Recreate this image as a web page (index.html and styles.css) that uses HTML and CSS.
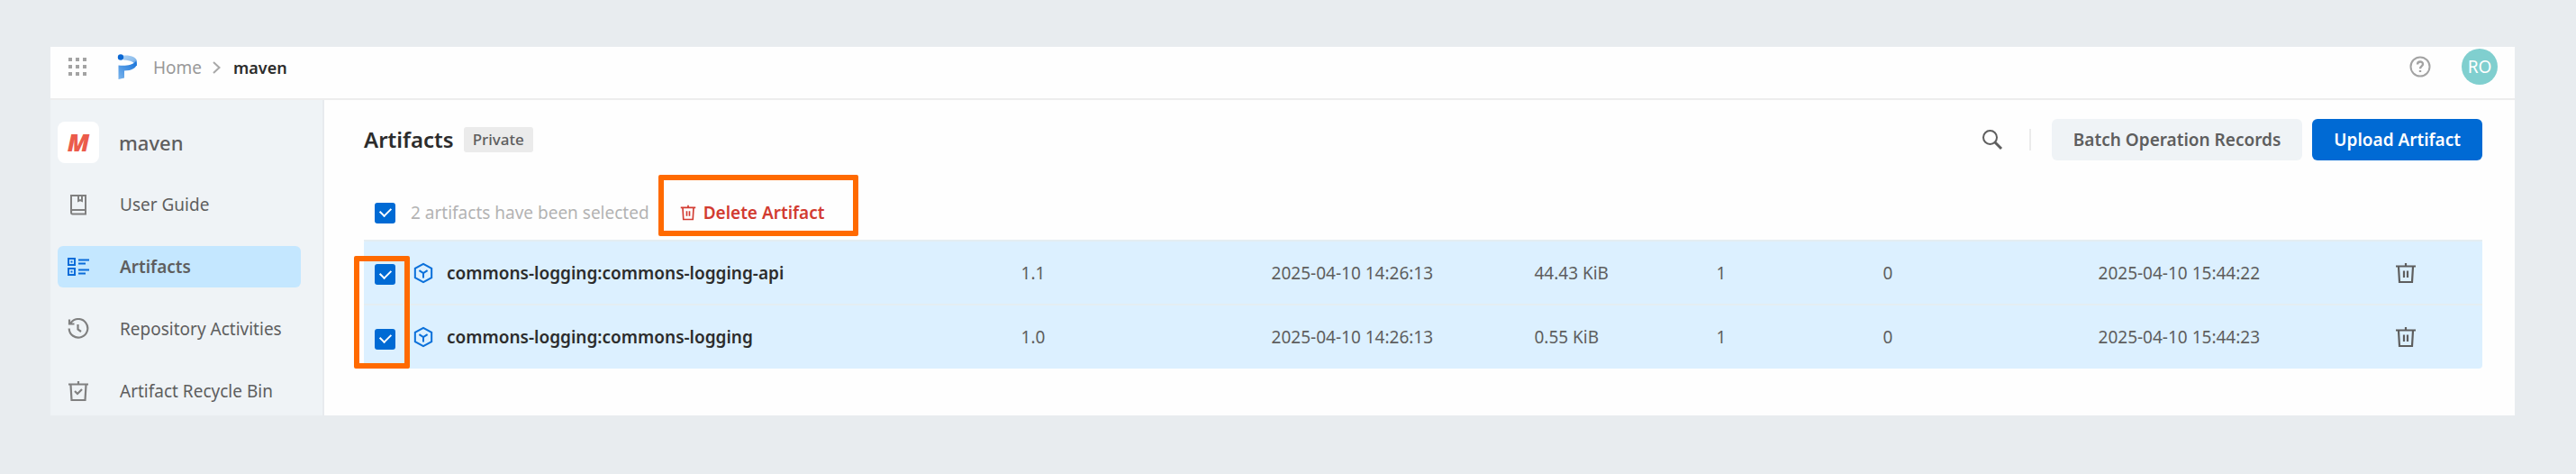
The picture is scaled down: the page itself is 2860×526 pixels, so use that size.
FILE: index.html
```html
<!DOCTYPE html>
<html lang="en">
<head>
<meta charset="utf-8">
<title>maven - Artifacts</title>
<link rel="stylesheet" href="styles.css">
</head>
<body>
<svg class="defs" aria-hidden="true">
  <symbol id="trash" viewBox="0 0 24 24" fill="none" stroke="currentColor" stroke-width="2.200">
    <path d="M1 4.500H23M12 1V4M4 5L5 22H19L20 5M10 9.500V17M14 9.500V17"/>
  </symbol>
  <symbol id="package" viewBox="0 0 24 26" fill="none" stroke="currentColor" stroke-width="2.200">
    <path d="M12 2L22 7.500V18.500L12 24L2 18.500V7.500ZM7 9.800L12 13L17 9.800M12 13V19"/>
  </symbol>
</svg>
<div class="app">
  <header class="topbar">
    <button class="icon-button apps" aria-label="Applications">
      <svg width="22" height="22" viewBox="0 0 22 22" fill="#a3a3a3"><path d="M1 1h4v4h-4zM9 1h4v4h-4zM17 1h4v4h-4zM1 9h4v4h-4zM9 9h4v4h-4zM17 9h4v4h-4zM1 17h4v4h-4zM9 17h4v4h-4zM17 17h4v4h-4z"/></svg>
    </button>
    <svg class="logo" width="22" height="28" viewBox="0 0 22 28" aria-hidden="true">
      <defs>
        <linearGradient id="bowl" x1="0" y1="0" x2="1" y2="1"><stop offset="0" stop-color="#a9cff2"/><stop offset=".6" stop-color="#8dbdec"/><stop offset="1" stop-color="#2b7fdb"/></linearGradient>
        <linearGradient id="stem" x1="0" y1="1" x2="1" y2="0"><stop offset="0" stop-color="#7ab4ec"/><stop offset="1" stop-color="#1672d9"/></linearGradient>
      </defs>
      <path d="M7 1.500C15 1 22 3 22 8.500V13H19.500C19.500 9 16 7 7 6.500Z" fill="url(#bowl)"/>
      <path d="M1.500 12.500C9 13.500 17 12.500 21 8C23.500 14 18 18.500 8 18.500V26.500L1.500 28Z" fill="url(#stem)"/>
      <circle cx="4" cy="3.500" r="3.200" fill="#0a67d3"/>
    </svg>
    <nav class="crumbs" aria-label="Breadcrumb">
      <a href="#">Home</a>
      <svg width="9" height="14" viewBox="0 0 9 14" fill="none" stroke="#a8a8a8" stroke-width="2"><path d="M1 1L7.500 7L1 13"/></svg>
      <a href="#" class="current">maven</a>
    </nav>
    <button class="icon-button help" aria-label="Help">
      <svg width="24" height="24" viewBox="0 0 24 24" fill="none" stroke="currentColor" stroke-width="2"><circle cx="12" cy="12" r="10.500"/><path d="M9 9.500C9 5.500 15 5.500 15 9.300C15 11.300 12 11.500 12 14.200M12 16V18" stroke-width="2.400"/></svg>
    </button>
    <button class="avatar">RO</button>
  </header>
  <div class="body">
    <aside class="sidebar">
      <div class="repo">
        <span class="repo-logo">M</span>
        <span>maven</span>
      </div>
      <nav class="menu" aria-label="Repository">
        <a href="#"><svg width="24" height="24" viewBox="0 0 24 24" fill="none" stroke="currentColor" stroke-width="2"><path d="M4 21V2H20V22.500H5.500C3.500 22.500 3.500 18 5.500 18H20M12 2V8L14 7L16 8V2"/></svg><span>User Guide</span></a>
        <a href="#" class="active"><svg width="24" height="24" viewBox="0 0 24 24" fill="none" stroke="currentColor" stroke-width="2"><path d="M1 3H8V10H1ZM1 14H8V21H1ZM12 4.500H24M12 8.500H20M12 15.500H24M12 19.500H20"/><path d="M3.500 5.500H5.500V7.500H3.500ZM3.500 16.500H5.500V18.500H3.500Z" fill="currentColor" stroke="none"/></svg><span>Artifacts</span></a>
        <a href="#"><svg width="24" height="24" viewBox="0 0 24 24" fill="none" stroke="currentColor" stroke-width="2.200"><path d="M3.500 5.500A10.300 10.300 0 1 1 1.700 11.500M2 1.500V6.500H7.500M11.500 7V12.500L15 15"/></svg><span>Repository Activities</span></a>
        <a href="#"><svg width="24" height="24" viewBox="0 0 24 24" fill="none" stroke="currentColor" stroke-width="2.200"><path d="M1 4.500H23M12 1V4M3.500 5L4.500 22H19.500L20.500 5M8 12L11 15L16 10"/></svg><span>Artifact Recycle Bin</span></a>
      </nav>
    </aside>
    <main class="content">
      <div class="heading">
        <h1>Artifacts</h1>
        <span class="tag">Private</span>
        <div class="actions">
          <button class="icon-button" aria-label="Search">
            <svg width="24" height="24" viewBox="0 0 24 24" fill="none" stroke="currentColor" stroke-width="2"><circle cx="9.500" cy="9.500" r="7.500"/><path d="M15 15L22 22" stroke-width="3"/></svg>
          </button>
          <span class="divider"></span>
          <button class="button">Batch Operation Records</button>
          <button class="button primary">Upload Artifact</button>
        </div>
      </div>
      <div class="selection">
        <label><input type="checkbox" checked><span>2 artifacts have been selected</span></label>
        <button class="delete"><svg width="18" height="20"><use href="#trash"/></svg>Delete Artifact</button>
      </div>
      <div class="list">
        <table>
          <colgroup><col class="name"><col class="version"><col class="time"><col class="size"><col class="files"><col class="downloads"><col class="updated"><col class="ops"></colgroup>
          <tbody>
            <tr>
              <td><div class="artifact"><input type="checkbox" checked aria-label="Select commons-logging-api"><svg width="22" height="24"><use href="#package"/></svg><a href="#">commons-logging:commons-logging-api</a></div></td>
              <td>1.1</td><td>2025-04-10 14:26:13</td><td>44.43 KiB</td><td>1</td><td>0</td><td>2025-04-10 15:44:22</td>
              <td><button class="icon-button" aria-label="Delete"><svg width="24" height="24"><use href="#trash"/></svg></button></td>
            </tr>
            <tr>
              <td><div class="artifact"><input type="checkbox" checked aria-label="Select commons-logging"><svg width="22" height="24"><use href="#package"/></svg><a href="#">commons-logging:commons-logging</a></div></td>
              <td>1.0</td><td>2025-04-10 14:26:13</td><td>0.55 KiB</td><td>1</td><td>0</td><td>2025-04-10 15:44:23</td>
              <td><button class="icon-button" aria-label="Delete"><svg width="24" height="24"><use href="#trash"/></svg></button></td>
            </tr>
          </tbody>
        </table>
        <span class="mark rows-mark"></span>
      </div>
    </main>
  </div>
</div>
</body>
</html>
```
FILE: styles.css
```css
* { box-sizing: border-box; }
body {
  margin: 0;
  padding: 52px 68px 66px 56px;
  background: #e8ecef;
  color: #5e5e5e;
  font: 19px/28px "Noto Sans", "Open Sans", sans-serif;
}
.defs { position: absolute; width: 0; height: 0; }
a { color: inherit; text-decoration: none; }
svg { display: block; flex: none; }
button { font: inherit; color: inherit; border: 0; padding: 0; background: none; cursor: pointer; }
.icon-button { display: block; }
.app { background: #fefefe; }

.topbar {
  display: flex;
  align-items: center;
  height: 59px;
  padding: 0 19px 14px;
  border-bottom: 2px solid #ededed;
}
.logo { margin-left: 33px; }
.crumbs { display: flex; align-items: center; gap: 12px; margin-left: 18px; padding-top: 2px; color: #999; }
.crumbs .current { color: #2c2c2c; font-weight: 600; font-size: 18px; margin-left: 2px; }
.help { margin-left: auto; color: #a3a3a3; }
.avatar {
  width: 40px;
  height: 40px;
  margin-left: 34px;
  border-radius: 50%;
  background: #80cfcf;
  color: #fff;
}

.body { display: flex; }
.sidebar {
  flex: none;
  width: 304px;
  padding: 24px 24px 0 8px;
  background: #eff3f6;
  border-right: 2px solid #e8ebee;
}
.repo { display: flex; align-items: center; gap: 22px; font-size: 22px; font-weight: 500; }
.repo-logo {
  width: 46px;
  height: 46px;
  border-radius: 8px;
  background: #fff;
  color: #eb5b4b;
  font: italic 900 27px/46px "Noto Sans", sans-serif;
  text-align: center;
}
.menu { display: flex; flex-direction: column; gap: 23px; margin-top: 23px; }
.menu a { display: flex; align-items: center; gap: 34px; height: 46px; padding-left: 11px; border-radius: 6px; }
.menu svg { color: #808080; }
.menu .active { background: #c4e7ff; font-weight: 600; }
.menu .active svg { color: #0a6cd9; }

.content { flex: 1; min-width: 0; padding: 21px 36px 0 44px; }
.heading { display: flex; align-items: center; gap: 11px; }
h1 { margin: 0; color: #2c2c2c; font-size: 24px; line-height: 32px; font-weight: 600; }
.tag { padding: 0 10px; border-radius: 3px; background: #ebebeb; font-size: 17px; font-weight: 500; }
.actions { display: flex; align-items: center; gap: 11px; margin-left: auto; }
.divider { width: 2px; height: 24px; margin: 0 12px 0 18px; background: #ebebeb; }
.button { height: 46px; padding: 0 24px; border-radius: 6px; background: #eff3f6; font-weight: 600; }
.button.primary { background: #006ad4; color: #fff; }

input[type="checkbox"] {
  appearance: none;
  flex: none;
  width: 23px;
  height: 23px;
  margin: 0;
  border-radius: 3px;
  background: #006ad4;
  display: grid;
  place-items: center;
}
input[type="checkbox"]::before {
  content: "";
  width: 10px;
  height: 6px;
  margin-bottom: 4px;
  border: solid #fff;
  border-width: 0 0 2px 2px;
  rotate: -45deg;
}
.selection { display: flex; align-items: center; gap: 10px; height: 68px; margin: 16px 0 4px 12px; }
.selection label { display: flex; align-items: center; gap: 17px; padding-top: 16px; color: #b3b3b3; }
.delete {
  display: flex;
  align-items: center;
  gap: 8px;
  height: 68px;
  padding: 16px 32px 0 18px;
  border: 6px solid #ff6a00;
  border-radius: 2px;
  color: #d23b31;
  font-weight: 600;
}

.list { position: relative; padding-bottom: 52px; }
table { width: 100%; table-layout: fixed; border-collapse: collapse; background: #dcf0ff; border-radius: 4px; }
tr { height: 71px; border-top: 2px solid #e4edf2; }
td { padding: 0; white-space: nowrap; }
.name { width: 31.02%; }
.version { width: 11.82%; }
.time { width: 12.41%; }
.size { width: 8.59%; }
.files { width: 7.87%; }
.downloads { width: 10.16%; }
.updated { width: 13.99%; }
.artifact { display: flex; align-items: center; padding-left: 12px; color: #2c2c2c; font-weight: 600; }
.artifact input { margin-top: 4px; }
.artifact svg { margin: 0 15px 0 20px; color: #0a70da; }
.mark { position: absolute; border: 6px solid #ff6a00; border-radius: 2px; pointer-events: none; }
.rows-mark { left: -11px; top: 18px; bottom: 52px; width: 62px; }
```
